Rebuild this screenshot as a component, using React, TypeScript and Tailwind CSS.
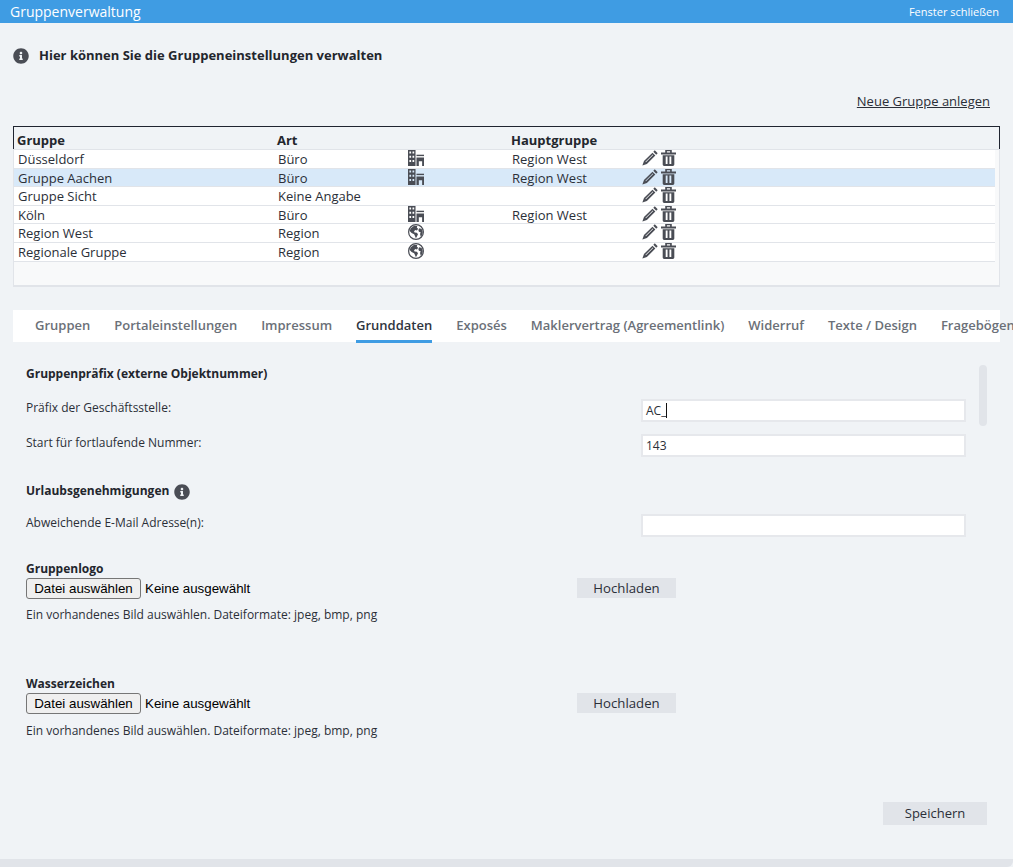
import { FaInfoCircle } from "react-icons/fa";

const rows = [
  { n: "Düsseldorf", a: "Büro", i: "b", h: "Region West", c: "h-[19px] bg-white" },
  { n: "Gruppe Aachen", a: "Büro", i: "b", h: "Region West", c: "h-[18px] bg-[#d8e9f9]" },
  { n: "Gruppe Sicht", a: "Keine Angabe", i: "", h: "", c: "h-[19px] bg-white" },
  { n: "Köln", a: "Büro", i: "b", h: "Region West", c: "h-[18px] bg-white" },
  { n: "Region West", a: "Region", i: "g", h: "", c: "h-[19px] bg-white" },
  { n: "Regionale Gruppe", a: "Region", i: "g", h: "", c: "h-[19px] bg-white" },
];

const tabs = ["Gruppen", "Portaleinstellungen", "Impressum", "Grunddaten", "Exposés", "Maklervertrag (Agreementlink)", "Widerruf", "Texte / Design", "Fragebögen"];

function Building() {
  return (
    <svg width="16" height="16" viewBox="0 0 17 17" fill="#4a4d55" className="-mt-[4px]">
      <path fillRule="evenodd" d="M0 0h8v17H0zM1.500 1.500v2.300h1.800V1.500zM4.800 1.500v2.300h1.800V1.500zM1.500 6v2.300h1.800V6zM4.800 6v2.300h1.800V6zM1.500 10.500v2.300h1.800v-2.300zM4.800 10.500v2.300h1.800v-2.300z" />
      <path d="M9 5h8v1.500H9z" />
      <path fillRule="evenodd" d="M9 8h8v9h-2v-5h-3.500v5H9z" />
    </svg>
  );
}

function Globe() {
  return (
    <svg width="16" height="16" viewBox="0 0 17 17" fill="#4a4d55" className="-mt-[4px]">
      <path fillRule="evenodd" d="M8.500 0a8.500 8.500 0 1 0 0 17a8.500 8.500 0 0 0 0-17zM8.500 1.300a7.200 7.200 0 1 1 0 14.400a7.200 7.200 0 0 1 0-14.400z" />
      <path d="M6.500 1.800 9.800 2.200 9.400 4 10.800 5 9.500 6.800 7.800 6.400 6.400 7.800 7 9 9.400 9.300 10.600 10.800 9.600 13 8.400 15.200 7.300 12.500 6.500 10.800 3.800 9.600 1.800 7.500 2.900 4.500z" />
      <path d="M12 4.500 14.500 5.200 15.700 8.500 15.200 11.600 13.500 13.500 12.800 10.500 13.500 8.800 11.600 8.300 11 6.300z" />
    </svg>
  );
}

function Pencil() {
  return (
    <svg width="16" height="16" viewBox="0 0 17 17" fill="#4a4d55">
      <path d="M13.600.3 16.700 3.400 15.100 5 12 1.900z" />
      <path fillRule="evenodd" d="M11.100 2.800 14.200 5.900 5.200 14.900 .4 16.600 2.100 11.800zM11.500 4.800 3.700 12.600 4.100 13 11.900 5.200z" />
    </svg>
  );
}

function Trash() {
  return (
    <svg width="15" height="16" viewBox="0 0 16 17" fill="#4a4d55">
      <path fillRule="evenodd" d="M4.500 0h7v2.500H16V4.700H0V2.500h4.500zM6.300 1.200V2.500h3.400V1.200z" />
      <path fillRule="evenodd" d="M1.800 5.500h12.400V15.500a1.500 1.500 0 0 1-1.500 1.500H3.300a1.500 1.500 0 0 1-1.500-1.500zM5 7V15H7V7zM9 7V15H11V7z" />
    </svg>
  );
}

function FileRow() {
  return (
    <div className="flex items-start h-[21px] mt-[1px]">
      <span className="w-[115px] h-[21px] flex items-center justify-center border border-[#767676] rounded-[3px] bg-[#efefef] text-black text-[13.33px] font-['Liberation_Sans',sans-serif]">Datei auswählen</span>
      <span className="ml-[4px] w-[432px] leading-[21px] text-black text-[13.33px] font-['Liberation_Sans',sans-serif]">Keine ausgewählt</span>
      <button className="w-[99px] h-[20px] bg-[#e1e4e9] text-[#2b2f38] text-[13.2px] leading-[20px]">Hochladen</button>
    </div>
  );
}

function Field({ label, value, cursor, className }: { label: string; value: string; cursor?: boolean; className: string }) {
  return (
    <div className={"flex items-start " + className}>
      <span className="w-[615px] pt-px text-[12px] leading-[16px] text-[#2b2f38]">{label}</span>
      <div className="w-[325px] h-[23px] bg-white border-2 border-[#e6e8ec] pl-[3px] text-[12px] leading-[20px] text-[#2b2f38] flex items-center">
        {value}
        {cursor && <span className="w-px h-[15px] bg-[#111]" />}
      </div>
    </div>
  );
}

export default function App() {
  return (
    <div className="relative w-[1013px] h-[867px] overflow-hidden bg-[#f0f3f6] font-['Open_Sans',sans-serif] text-[#2b2f38]">
      <header className="h-[23px] bg-[#3f9ce3] text-white flex items-center justify-between pl-[10px] pr-[14px]">
        <span className="text-[14px] leading-[23px]">Gruppenverwaltung</span>
        <span className="text-[11px] leading-[25px]">Fenster schließen</span>
      </header>

      <div className="flex items-center ml-[13px] mt-[24px] h-[17px]">
        <FaInfoCircle className="w-[16px] h-[16px] text-[#4a4d55]" />
        <span className="ml-[10px] text-[13px] font-bold text-[#23262d]">Hier können Sie die Gruppeneinstellungen verwalten</span>
      </div>

      <div className="flex justify-end pr-[23px] mt-[25px] h-[25px]">
        <span className="text-[13px] leading-[24px] underline text-[#2b2f38]">Neue Gruppe anlegen</span>
      </div>

      <div className="ml-[13px] mt-[12px] w-[987px] h-[161px] bg-[#f8f9fa] border-b-2 border-r border-l border-b-[#e1e4e9] border-x-[#e1e4e9]">
        <div className="-ml-px -mr-px h-[23px] border-t border-x border-[#1f2430] border-b-0 bg-[#f0f3f6] flex items-end text-[13px] font-bold text-[#23262d] leading-[18px] pl-[3px]">
          <span className="w-[260px]">Gruppe</span>
          <span className="w-[234px]">Art</span>
          <span>Hauptgruppe</span>
        </div>
        <div className="pr-[4px] border-t-[1px] border-[#e1e4e9]">
          {rows.map((r) => (
            <div key={r.n} className={"flex items-center pl-[4px] pt-[2px] text-[13px] text-[#2b2f38] border-b border-[#e1e4e9] box-border " + r.c}>
              <span className="w-[260px]">{r.n}</span>
              <span className="w-[130px]">{r.a}</span>
              <span className="w-[104px] flex">
                {r.i === "b" && <Building />}
                {r.i === "g" && <Globe />}
              </span>
              <span className="w-[130px]">{r.h}</span>
              <span className="flex gap-[3px] items-center -mt-[4px]">
                <Pencil />
                <Trash />
              </span>
            </div>
          ))}
        </div>
      </div>

      <nav className="ml-[13px] mt-[23px] w-[987px] h-[32px] bg-white flex gap-[24px] pl-[22px] text-[13px] font-semibold text-[#6b7078] whitespace-nowrap">
        {tabs.map((t) => (
          <span key={t} className={t === "Grunddaten" ? "h-[33px] leading-[31px] border-b-[3px] border-[#3f9ce3] text-[#2f3540]" : "leading-[31px]"}>{t}</span>
        ))}
      </nav>

      <section className="relative pl-[26px]">
        <div className="absolute left-[979px] top-[23px] w-[8px] h-[61px] rounded-[4px] bg-[#e1e4e9]" />
        <h3 className="pt-[24px] text-[12px] leading-[16px] font-bold text-[#23262d]">Gruppenpräfix (externe Objektnummer)</h3>
        <Field label="Präfix der Geschäftsstelle:" value="AC_" cursor className="mt-[17px]" />
        <Field label="Start für fortlaufende Nummer:" value="143" className="mt-[12px]" />
        <div className="mt-[25px] h-[18px] flex items-center">
          <h3 className="text-[12px] leading-[16px] font-bold text-[#23262d]">Urlaubsgenehmigungen</h3>
          <FaInfoCircle className="ml-[5px] mt-[2px] w-[16px] h-[16px] text-[#4a4d55]" />
        </div>
        <Field label="Abweichende E-Mail Adresse(n):" value="" className="mt-[14px]" />
        <h3 className="mt-[24px] text-[12px] leading-[16px] font-bold text-[#23262d]">Gruppenlogo</h3>
        <FileRow />
        <p className="mt-[8px] text-[12px] leading-[16px] text-[#2b2f38]">Ein vorhandenes Bild auswählen. Dateiformate: jpeg, bmp, png</p>
        <h3 className="mt-[53px] text-[12px] leading-[16px] font-bold text-[#23262d]">Wasserzeichen</h3>
        <FileRow />
        <p className="mt-[9px] text-[12px] leading-[16px] text-[#2b2f38]">Ein vorhandenes Bild auswählen. Dateiformate: jpeg, bmp, png</p>
        <div className="flex justify-end pr-[26px] mt-[63px]">
          <button className="w-[104px] h-[23px] bg-[#e1e4e9] text-[13px] leading-[23px] text-[#2b2f38]">Speichern</button>
        </div>
      </section>

      <div className="absolute left-0 right-0 bottom-0 h-[8px] bg-[#e1e4e9] rounded-br-[6px]" />
    </div>
  );
}
